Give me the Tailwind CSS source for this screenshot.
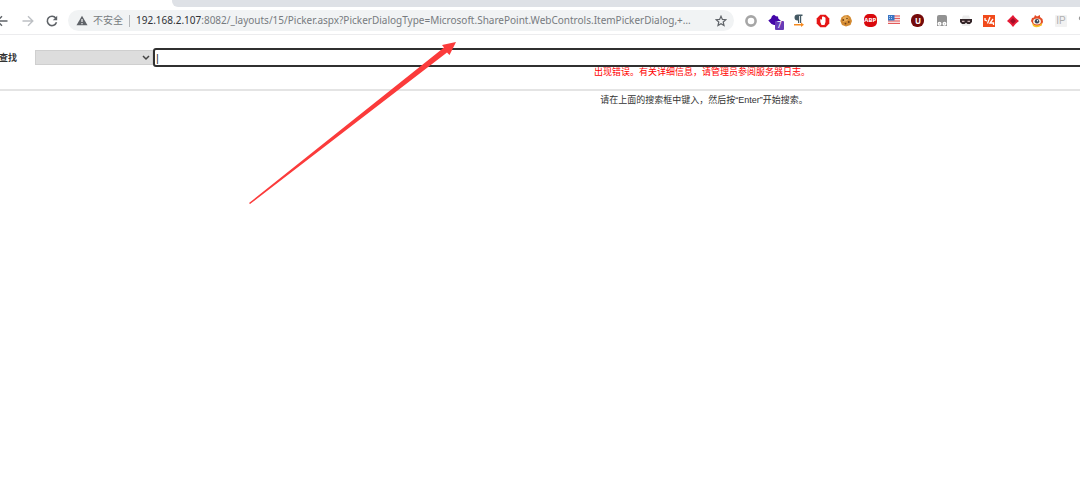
<!DOCTYPE html>
<html lang="zh-CN">
<head>
<meta charset="utf-8">
<title>Picker</title>
<script src="https://cdn.jsdelivr.net/npm/@tailwindcss/browser@4"></script>
</head>
<body class="relative min-h-screen overflow-x-hidden bg-white font-['Liberation_Sans','Noto_Sans_CJK_SC',sans-serif]">
<header>
  <div class="h-[7px] bg-white pl-[172px]"><div class="h-full rounded-bl-md bg-[#dee1e6]"></div></div>
  <div class="flex h-7 items-center overflow-hidden border-b border-[#ececee] font-['Noto_Sans','Noto_Sans_CJK_SC',sans-serif]">
    <nav class="flex w-[68px] shrink-0 items-center gap-3">
      <button aria-label="后退" class="-ml-1 h-3 w-3 text-[#5f6368]"><svg viewBox="0 0 12 12" class="h-3 w-3" fill="none" stroke="currentColor" stroke-width="1.4"><path d="M11.5 6H1.5M6 1.2 1.2 6 6 10.8"/></svg></button>
      <button aria-label="前进" class="ml-0.5 h-3 w-3 text-[#bdc0c4]"><svg viewBox="0 0 12 12" class="h-3 w-3" fill="none" stroke="currentColor" stroke-width="1.4"><path d="M.5 6h10M6 1.2 10.8 6 6 10.8"/></svg></button>
      <button aria-label="重新加载" class="h-3 w-3 text-[#5f6368]"><svg viewBox="0 0 12 12" class="h-3 w-3" fill="none" stroke="currentColor" stroke-width="1.6"><path d="M9.8 3.1A4.7 4.7 0 1 0 10.5 7.3"/><path d="M11.2.8v4.4H6.8z" fill="currentColor" stroke="none"/></svg></button>
    </nav>
    <div class="flex h-[21px] min-w-0 flex-1 items-center rounded-full bg-[#f1f3f4] pr-[7px] pl-2 text-[10px] text-[#777b80]">
      <svg viewBox="0 0 12 11" class="h-[11px] w-3 shrink-0"><path d="M6 .7 11.5 10.2H.5z" fill="#5f6368"/><path d="M6 4v3M6 8v1.2" stroke="#fff" stroke-width="1.1"/></svg>
      <span class="ml-[5px] shrink-0">不安全</span>
      <span class="mr-1.5 ml-1.5 h-3 w-px shrink-0 bg-[#b4b7ba]"></span>
      <span class="min-w-0 flex-1 overflow-hidden whitespace-nowrap"><span class="text-[#303236]">192.168.2.107</span>:8082/_layouts/15/Picker.aspx?PickerDialogType=Microsoft.SharePoint.WebControls.ItemPickerDialog,+…</span>
      <button aria-label="收藏" class="h-3 w-3 shrink-0"><svg viewBox="0 0 12 12" class="h-3 w-3" fill="none" stroke="#5f6368" stroke-width="1.2"><path d="m6 1.2 1.4 3.2 3.5.3-2.7 2.3.8 3.5L6 8.7 3 10.5 3.800 7 1.100 4.700l3.500-.3z"/></svg></button>
    </div>
    <div class="-mr-3 ml-[10px] flex w-[348px] shrink-0 items-center justify-between whitespace-nowrap">
      <button aria-label="圆环" class="shrink-0"><svg viewBox="0 0 14 14" class="size-3.5"><circle cx="7" cy="7" r="4.600" fill="none" stroke="#a6a6a6" stroke-width="2.600"/></svg></button>
      <button aria-label="扩展 7" class="relative size-3.5 shrink-0"><svg viewBox="0 0 14 14" class="size-3.5"><path d="m6 .8 2 1.500 2 .2.300 2L13 7l-3 4H6L3.500 10 .3 6.500l2.700-2L4 2z" fill="#4306a8"/></svg><span class="absolute top-[7px] left-[7px] flex h-[9px] w-[9px] items-center justify-center rounded-[1px] bg-[#673ab7] text-[8px] leading-none text-white">7</span></button>
      <button aria-label="段落" class="shrink-0"><svg viewBox="0 0 14 14" class="size-3.5"><path d="M10.500 .5H5.500a3 3 0 0 0 0 6H6V9h1.200V2h.8v7h1.200V2h1.300z" fill="#455a64"/><path d="M2 10h7V8.500l3 2.300-3 2.200v-1.500H2z" fill="#f58a1f"/></svg></button>
      <button aria-label="阻止" class="shrink-0"><svg viewBox="0 0 14 14" class="size-3.5"><path d="M4.300.7h5.400l3.600 3.800v5L9.700 13.300H4.300L.7 9.500v-5z" fill="#e51616"/><path d="M4.300 5.500 5 5l1 1V3l1-.8L8 3l1 .3.500.7v4L8.500 11h-3L4.300 8z" fill="#fff"/></svg></button>
      <button aria-label="Cookie" class="shrink-0"><svg viewBox="0 0 14 14" class="size-3.5"><path d="M5 1.500 9 1l2.500 2L13 7l-1.500 4L7 12.600 3 11 1.300 7 2.500 3.500z" fill="#d38a31"/><path d="M4 3.500 7 2l3 2-2 3-4 1z" fill="#e9ad59"/><g fill="#70401a"><circle cx="4.300" cy="6" r=".9"/><circle cx="8" cy="4.500" r=".8"/><circle cx="9.800" cy="8" r=".9"/><circle cx="6.500" cy="9.600" r=".9"/></g></svg></button>
      <button aria-label="Adblock" class="flex size-3.5 shrink-0 items-center justify-center"><span class="flex h-[13px] w-[13px] items-center justify-center rounded-[5px] bg-[#d9090d] text-[6px] font-bold text-white">ABP</span></button>
      <button aria-label="美国" class="shrink-0"><svg viewBox="0 0 14 14" class="size-3.5"><path d="M1 1h12v9H1z" fill="#f7dddd"/><path d="M1 2h12M1 4.500h12M1 7h12M1 9.500h12" stroke="#e45b5b"/><path d="M1 1h6.500v5.500H1z" fill="#3975c4"/><path d="M2 2.500h4M2 4.500h4" stroke="#c8ddf6" stroke-width=".8" stroke-dasharray="1 1"/></svg></button>
      <button aria-label="uBlock" class="flex size-3.5 shrink-0 items-center justify-center"><span class="flex h-[13px] w-[13px] items-center justify-center rounded-[6px] bg-[#750b0b] text-[8px] font-bold text-white">U</span></button>
      <button aria-label="猴子" class="shrink-0"><svg viewBox="0 0 14 14" class="size-3.5"><path d="M2 3q0-2 2-2h6q2 0 2 2v9H2z" fill="#929292"/><circle cx="4.500" cy="9.800" r="2" fill="#fff"/><circle cx="9.500" cy="9.800" r="2" fill="#fff"/><path d="M4.500 9v1.500M9.500 9v1.500" stroke="#ccc"/></svg></button>
      <button aria-label="面具" class="shrink-0"><svg viewBox="0 0 14 14" class="size-3.5"><path d="M3 4 4 1.500h6L11 4v8H3z" fill="#ececec"/><path d="M1 5h12v3l-2 2H8.500L7 8.800 5.500 10H3L1 8z" fill="#332528"/><path d="M3 7.300h2.500M8.500 7.300H11" stroke="#c8aeb0" stroke-width="1.300"/></svg></button>
      <button aria-label="代码" class="shrink-0"><svg viewBox="0 0 14 14" class="size-3.5"><path d="M1 1h12v12H1z" fill="#f14a1b"/><path d="M3 4v2l2 1M8 3 5.500 9.500M11 5 8 9h3.500v2" fill="none" stroke="#fff" stroke-width="1.300"/></svg></button>
      <button aria-label="菱形" class="shrink-0"><svg viewBox="0 0 14 14" class="size-3.5"><path d="m7 1 2 2.500L13 7l-3.500 3L7 13l-2.500-3L1 7l3.500-3.500z" fill="#e51b36"/><path d="m7 4 3 3-3 3-3-3z" fill="#a40c26"/></svg></button>
      <button aria-label="眼睛" class="shrink-0"><svg viewBox="0 0 14 14" class="size-3.5"><path d="m1 7 1-3 2-.5L5 1l2 1.500L10 1v2l2.500 2L13 8l-2 4H4z" fill="#e34b26"/><path d="M2 9q5 5 10 0v2q-5 4-9 1z" fill="#f7c52a"/><ellipse cx="7" cy="7.500" rx="4" ry="3" fill="#f7e9dc"/><circle cx="7" cy="7.300" r="2.200" fill="#374659"/><circle cx="7.500" cy="6.700" r=".7" fill="#fff"/></svg></button>
      <button aria-label="IP" class="flex size-3.5 shrink-0 items-center justify-center"><span class="flex h-3 w-3 items-center justify-center rounded-[1px] bg-[#f2f2f2] font-['Liberation_Sans',sans-serif] text-[10px] leading-none text-[#b0b0b0]">IP</span></button>
      <button aria-label="更多" class="shrink-0"><svg viewBox="0 0 14 14" class="size-3.5"><path d="M7 2H3a2.200 2.200 0 0 0 0 4.400H4V11h1V3h2z" fill="#999"/></svg></button>
    </div>
  </div>
</header>
<main class="w-[130%] text-[9px] leading-3">
  <form class="flex items-center pt-[13px]">
    <label for="field" class="-ml-px w-9 shrink-0 font-bold text-[#333]">查找</label>
    <div class="relative w-[118px] shrink-0">
      <select id="field" class="block h-[15px] w-full appearance-none border border-[#cfcfcf] bg-[#dddddd]"><option></option></select>
      <svg viewBox="0 0 8 6" class="pointer-events-none absolute top-[5px] right-[3px] h-1.5 w-2"><path d="m1 1 3 3 3-3" fill="none" stroke="#444" stroke-width="1.500"/></svg>
    </div>
    <input aria-label="搜索" value="|" class="h-[19px] min-w-0 flex-1 rounded-[3px] border-2 border-[#303030] bg-white px-px text-[11px] leading-none text-[#333] outline-none">
  </form>
  <p class="-mt-px text-center text-[#ff0000]">出现错误。有关详细信息，请管理员参阅服务器日志。</p>
  <hr class="mt-[11px] border-t-2 border-[#e4e4e4]">
  <p class="mt-[3px] pl-1 text-center text-[#333]">请在上面的搜索框中键入，然后按“Enter”开始搜索。</p>
</main>
<svg viewBox="0 0 207 163" class="pointer-events-none absolute top-[42px] left-[249px] h-[163px] w-[207px]" aria-hidden="true"><path d="M0 161 195 5.500 193 3 207 0 200.500 13 198 10.500 1 162Z" fill="#fb3b3b"/></svg>
</body>
</html>
